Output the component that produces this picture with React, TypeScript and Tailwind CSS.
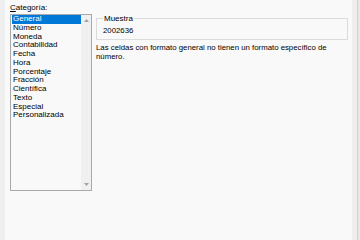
export default function App() {
  const items = [
    "General",
    "Número",
    "Moneda",
    "Contabilidad",
    "Fecha",
    "Hora",
    "Porcentaje",
    "Fracción",
    "Científica",
    "Texto",
    "Especial",
    "Personalizada",
  ]

  return (
    <div
      className="flex w-[360px] h-[240px] overflow-hidden bg-[#f9f9f9] text-[#000]"
      style={{ fontFamily: '"Liberation Sans", Arial, sans-serif' }}
    >
      {/* left edge */}
      <div className="w-[5px] h-full bg-[#efefef]"></div>

      <div className="flex flex-1 gap-[4px] pl-[5px]">
        {/* Category list */}
        <div className="flex flex-col w-[82px]">
          <div className="h-[14px] pt-[3px] text-[8px] leading-[9px]">
            <span className="underline">C</span>ategoría:
          </div>
          <div className="flex h-[177px] border border-[#a9a9a9] bg-[#f9f9f9]">
            <div className="flex flex-col flex-1 pl-[1px]">
              {items.map((item, i) => (
                <div
                  key={item}
                  className={
                    i === 0
                      ? "h-[8.75px] leading-[8.75px] text-[8px] pl-[1px] bg-[#0078d7] text-white"
                      : "h-[8.75px] leading-[8.75px] text-[8px] pl-[1px] text-[#000]"
                  }
                >
                  {item}
                </div>
              ))}
            </div>
            {/* scrollbar */}
            <div className="flex flex-col justify-between items-center w-[10px] bg-[#f0f0f0] py-[4px]">
              <svg width="5" height="3" viewBox="0 0 5 3">
                <path d="M0 3 L2.5 0 L5 3 Z" fill="#a3a3a3" />
              </svg>
              <svg width="5" height="3" viewBox="0 0 5 3">
                <path d="M0 0 L5 0 L2.5 3 Z" fill="#a3a3a3" />
              </svg>
            </div>
          </div>
        </div>

        {/* Sample area */}
        <div className="flex flex-col w-[252px] pt-[14px]">
          <fieldset className="border border-[#dcdcdc] h-[26px] pl-[6px] pr-[6px]">
            <legend className="px-[1px] text-[8px] leading-[9px]">Muestra</legend>
            <div className="text-[7.8px] leading-[9px] pt-[3px]">2002636</div>
          </fieldset>
          <div className="mt-[4px] text-[7.8px] leading-[8.5px]">
            Las celdas con formato general no tienen un formato específico de
            <br />
            número.
          </div>
        </div>
      </div>

      {/* right edge */}
      <div className="flex h-full">
        <div className="w-[5px] bg-[#eeeeee]"></div>
        <div className="w-[1px] bg-[#d2d2d2]"></div>
        <div className="w-[2px] bg-[#e8e8e8]"></div>
      </div>
    </div>
  )
}
